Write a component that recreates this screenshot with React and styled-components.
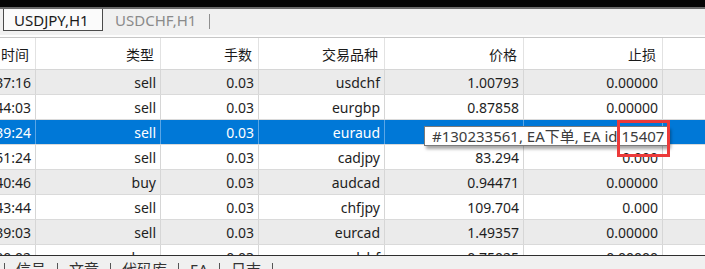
import React from "react";
import styled, { createGlobalStyle } from "styled-components";

const Global = createGlobalStyle`
  html, body { margin: 0; padding: 0; background: #f0f0f0; }
  body { font-family: "Noto Sans", "Noto Sans CJK SC", sans-serif; }
  #root { width: 705px; height: 269px; overflow: hidden; }
`;

const FONT = `"Noto Sans", "Noto Sans CJK SC", sans-serif`;
const COLS = "36px 125px 98px 126px 139px 139px 1fr";

const Frame = styled.div`
  width: 705px;
  height: 269px;
  display: flex;
  flex-direction: column;
  overflow: hidden;
  font-family: ${FONT};
  font-size: 14px;
`;

const TopBlack = styled.div`
  height: 7px;
  background: #050505;
  flex: none;
`;

const TabStrip = styled.div`
  height: 26px;
  flex: none;
  display: flex;
  align-items: flex-start;
  background: #f0f0f0;
  border-top: 2px solid #6a6a6a;
  border-bottom: 2px solid #fdfdfd;
  padding-left: 3px;
`;

const ChartTab = styled.div`
  height: 22px;
  box-sizing: border-box;
  display: flex;
  align-items: center;
  padding: ${(p) => (p.$active ? "0 0 0 10px" : "0 0 0 12px")};
  width: ${(p) => (p.$active ? "100px" : "auto")};
  background: ${(p) => (p.$active ? "#fbfbfb" : "transparent")};
  border: ${(p) => (p.$active ? "1px solid #4a4a4a" : "none")};
  border-top: none;
  color: ${(p) => (p.$active ? "#1a1a1a" : "#8a8a8a")};
  font-size: 15px;
  line-height: 22px;
  white-space: nowrap;
`;

const StripSep = styled.span`
  display: inline-block;
  margin-left: 13px;
  margin-top: 5px;
  width: 1px;
  height: 15px;
  background: #8f8f8f;
`;

const TableArea = styled.div`
  position: relative;
  flex: 1;
  display: flex;
  flex-direction: column;
  overflow: hidden;
  background: #ffffff;
  border-top: 1px solid #c6c6c6;
`;

const HeaderRow = styled.div`
  display: grid;
  grid-template-columns: ${COLS};
  height: 31px;
  flex: none;
  background: #ffffff;
  border-bottom: 1px solid #d6d6d6;
`;

const HeadCell = styled.div`
  display: flex;
  justify-content: flex-end;
  align-items: center;
  padding-right: 6px;
  overflow: hidden;
  white-space: nowrap;
  color: #1a1a1a;
  border-right: ${(p) => (p.$last ? "none" : "1px solid #e2e2e2")};
`;

const Body = styled.div`
  flex: 1;
  overflow: hidden;
`;

const Row = styled.div`
  display: grid;
  grid-template-columns: ${COLS};
  height: 25px;
  box-sizing: border-box;
  border-bottom: 1px solid #dadada;
  background: ${(p) => (p.$selected ? "#0078d7" : p.$odd ? "#ebebeb" : "#ffffff")};
  color: ${(p) => (p.$selected ? "#ffffff" : "#1e1e1e")};
`;

const Cell = styled.div`
  display: flex;
  justify-content: flex-end;
  align-items: center;
  padding-right: 4px;
  overflow: hidden;
  white-space: nowrap;
  border-right: ${(p) =>
    p.$last ? "none" : p.$selected ? "1px solid #5aa6e6" : "1px solid #d6d6d6"};
`;

const BottomBar = styled.div`
  height: 13px;
  flex: none;
  background: #f0f0f0;
  border-top: 1px solid #2e2e2e;
  display: flex;
  align-items: flex-start;
  padding-left: 4px;
  overflow: hidden;
`;

const BottomTab = styled.span`
  padding: 0 11px;
  line-height: 20px;
  margin-top: 3px;
  color: #333333;
  font-size: 15px;
  white-space: nowrap;
`;

const BottomSep = styled.span`
  display: inline-block;
  width: 1px;
  height: 16px;
  margin-top: 7px;
  background: #555555;
`;

const Tooltip = styled.div`
  position: absolute;
  left: 424px;
  top: 88px;
  width: 245px;
  height: 20px;
  box-sizing: border-box;
  background: #ffffff;
  border: 1px solid #7a7a7a;
  box-shadow: 2px 3px 3px rgba(0, 0, 0, 0.35);
  color: #3c3c3c;
  padding-left: 7px;
  font-size: 15px;
  line-height: 18px;
  white-space: nowrap;
  overflow: hidden;
`;

const Highlight = styled.div`
  position: absolute;
  left: 617px;
  top: 82px;
  width: 53px;
  height: 37px;
  box-sizing: border-box;
  border: 3px solid #ec3a3a;
`;

const rows = [
  ["2021.03.16 12:37:16", "sell", "0.03", "usdchf", "1.00793", "0.00000"],
  ["2021.03.16 12:44:03", "sell", "0.03", "eurgbp", "0.87858", "0.00000"],
  ["2021.03.16 12:39:24", "sell", "0.03", "euraud", "1.60912", "0.00000"],
  ["2021.03.16 12:51:24", "sell", "0.03", "cadjpy", "83.294", "0.000"],
  ["2021.03.16 12:40:46", "buy", "0.03", "audcad", "0.94471", "0.00000"],
  ["2021.03.16 12:43:44", "sell", "0.03", "chfjpy", "109.704", "0.000"],
  ["2021.03.16 12:39:03", "sell", "0.03", "eurcad", "1.49357", "0.00000"],
  ["2021.03.16 12:00:02", "buy", "0.03", "cadchf", "0.75025", "0.00000"],
];

const headers = ["时间", "类型", "手数", "交易品种", "价格", "止损", ""];
const bottomTabs = ["信号", "文章", "代码库", "EA", "日志"];

export default function App() {
  return (
    <>
      <Global />
      <Frame>
        <TopBlack />
        <TabStrip>
          <ChartTab $active>USDJPY,H1</ChartTab>
          <ChartTab>USDCHF,H1</ChartTab>
          <StripSep />
        </TabStrip>
        <TableArea>
          <HeaderRow>
            {headers.map((h, i) => (
              <HeadCell key={i} $last={i === headers.length - 1}>
                {h}
              </HeadCell>
            ))}
          </HeaderRow>
          <Body>
            {rows.map((r, i) => {
              const selected = i === 2;
              return (
                <Row key={i} $odd={i % 2 === 0} $selected={selected}>
                  {r.map((c, j) => (
                    <Cell key={j} $selected={selected}>
                      {c}
                    </Cell>
                  ))}
                  <Cell $last />
                </Row>
              );
            })}
          </Body>
          <Tooltip>#130233561, EA下单, EA id 15407</Tooltip>
          <Highlight />
        </TableArea>
        <BottomBar>
          <BottomSep />
          {bottomTabs.map((t) => (
            <React.Fragment key={t}>
              <BottomTab>{t}</BottomTab>
              <BottomSep />
            </React.Fragment>
          ))}
        </BottomBar>
      </Frame>
    </>
  );
}
